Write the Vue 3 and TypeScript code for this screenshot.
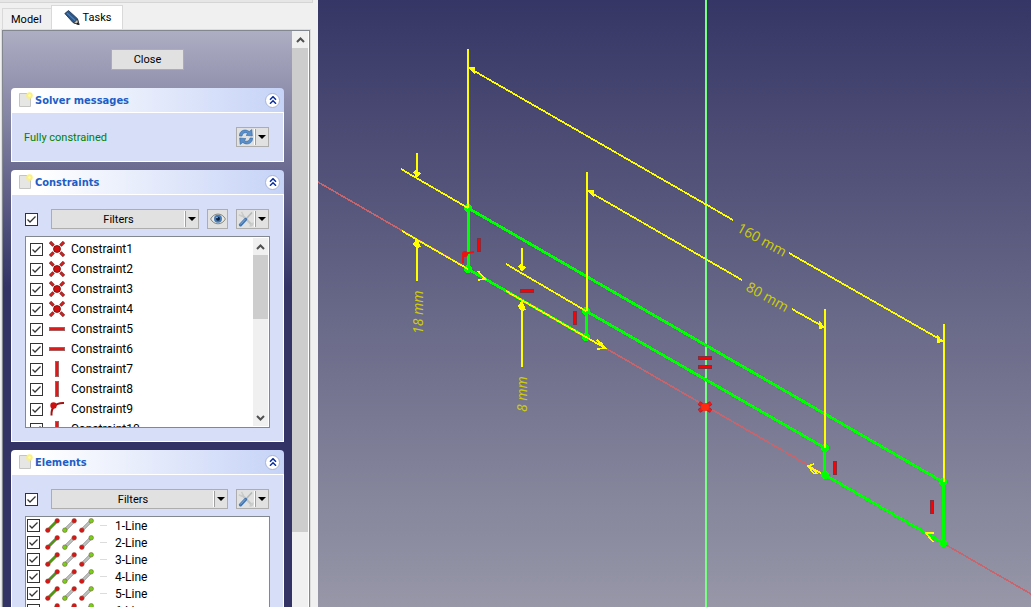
<script setup lang="ts">
import { ref } from 'vue'

type ConstraintKind = 'coincident' | 'horizontal' | 'vertical' | 'tangent'

interface Constraint {
  name: string
  kind: ConstraintKind
  active: boolean
}

interface SketchElement {
  name: string
  visible: boolean
}

const kinds: ConstraintKind[] = [
  'coincident', 'coincident', 'coincident', 'coincident',
  'horizontal', 'horizontal', 'vertical', 'vertical', 'tangent', 'vertical',
]

const constraints = ref<Constraint[]>(
  kinds.map((kind, i) => ({ name: `Constraint${i + 1}`, kind, active: true })),
)

const elements = ref<SketchElement[]>(
  Array.from({ length: 6 }, (_, i) => ({ name: `${i + 1}-Line`, visible: true })),
)

const allConstraints = ref(true)
const allElements = ref(true)

const RED = '#dc1414'
const LIME = '#73d216'

/* edge, start point and end point selection icons */
const lineIcons = [
  { line: '#4e9a06', start: RED, end: RED },
  { line: '#c0c4c0', start: LIME, end: RED },
  { line: '#c0c4c0', start: RED, end: LIME },
]

const points = [
  [468, 208], [468, 269], [586, 311], [586, 337],
  [825, 448], [825, 475], [943, 482], [943, 543],
]

const verticalMarks = [
  [479, 245], [575, 318], [835, 468], [932, 507],
]

const horizontalMarks = [
  [527, 291], [705, 358], [705, 367],
]
</script>

<template>
  <div class="app">
    <aside class="dock">
      <div class="strip"></div>
      <div class="tabs" role="tablist">
        <button class="tab" role="tab" aria-selected="false">Model</button>
        <button class="tab active" role="tab" aria-selected="true">
          <svg width="16" height="16" viewBox="0 0 16 16" aria-hidden="true">
            <path d="M.8 3.500 4.500.500l9 8.200 1.600 6-6-2z" fill="#2a5688" stroke="#16314f" stroke-width=".8" />
            <path d="M3 3 11.500 10.800" stroke="#4f7fb4" stroke-width="1.200" />
            <path d="m9.800 12.800 3.600-3.600 1.600 5.400z" fill="#c9c5bb" stroke="#222" stroke-width=".7" />
            <path d="m12.400 13.800 1.500-1.500 1.100 2.300z" fill="#111" />
          </svg>
          Tasks
        </button>
      </div>

      <div class="frame">
        <div class="tasks">
          <button class="push close">Close</button>

          <section class="card">
            <header class="head">
              <svg class="doc" width="14" height="16" viewBox="0 0 14 16" aria-hidden="true">
                <path d="M.5 1.500h11v13H.5z" fill="#e6e6e4" stroke="#c4c4c2" />
                <circle cx="10.500" cy="3.500" r="3.200" fill="#fbf07a" />
                <circle cx="10.500" cy="3.500" r="1.200" fill="#fffbd0" />
              </svg>
              <h2>Solver messages</h2>
              <button class="fold" aria-label="Collapse solver messages">
                <svg width="8" height="8" viewBox="0 0 8 8"><path d="m1 3.700 3-3 3 3M1 7.700l3-3 3 3" /></svg>
              </button>
            </header>
            <div class="body solver">
              <p class="status">Fully constrained</p>
              <button class="push split" aria-label="Update">
                <span class="main">
                  <svg width="16" height="16" viewBox="0 0 16 16">
                    <path d="M1.500 7C1 2 7-1 11.200 2.600L13.800.6 14.300 7 8 6.300l2-1.600C7.500 2.800 4.700 3.800 4 7z" fill="#5b8fc9" stroke="#2f66a5" stroke-width=".6" />
                    <path d="M14.500 9c.5 5-5.500 8-9.700 4.400L2.200 15.400 1.700 9 8 9.700l-2 1.600c2.500 1.900 5.300.9 6-2.300z" fill="#5b8fc9" stroke="#2f66a5" stroke-width=".6" />
                  </svg>
                </span>
                <span class="drop"></span>
              </button>
            </div>
          </section>

          <section class="card">
            <header class="head">
              <svg class="doc" width="14" height="16" viewBox="0 0 14 16" aria-hidden="true">
                <path d="M.5 1.500h11v13H.5z" fill="#e6e6e4" stroke="#c4c4c2" />
                <circle cx="10.500" cy="3.500" r="3.200" fill="#fbf07a" />
                <circle cx="10.500" cy="3.500" r="1.200" fill="#fffbd0" />
              </svg>
              <h2>Constraints</h2>
              <button class="fold" aria-label="Collapse constraints">
                <svg width="8" height="8" viewBox="0 0 8 8"><path d="m1 3.700 3-3 3 3M1 7.700l3-3 3 3" /></svg>
              </button>
            </header>
            <div class="body">
              <div class="tools">
                <input v-model="allConstraints" type="checkbox" class="tick all" aria-label="All constraints" />
                <button class="push split wide">
                  <span class="main">Filters</span>
                  <span class="drop"></span>
                </button>
                <button class="push eye" aria-label="Show constraints">
                  <svg width="16" height="12" viewBox="0 0 16 12">
                    <path d="M.6 6C4-.6 12-.6 15.400 6 12 12.400 4 12.400.6 6z" fill="#e9eae6" stroke="#85877f" />
                    <circle cx="8" cy="5.800" r="4" fill="#4a7db5" />
                    <circle cx="8" cy="5.800" r="2" fill="#10243f" />
                    <circle cx="7" cy="4.600" r=".7" fill="#fff" />
                  </svg>
                </button>
                <button class="push split" aria-label="Constraint settings">
                  <span class="main">
                    <svg width="16" height="16" viewBox="0 0 16 16">
                      <path d="m4 4 9.500 9.500" stroke="#c3c6c5" stroke-width="2.200" />
                      <path d="M3.500.8 5 3.500 3.500 5 .8 3.700M11.500 15q3.500 0 3.500-3.500" fill="none" stroke="#c9cccb" stroke-width="1.500" />
                      <path d="m8 8 6-6.500" stroke="#b4b8b7" stroke-width="1.600" />
                      <path d="M2.500 13.800 7.500 8.500" stroke="#3f74b3" stroke-width="3.200" stroke-linecap="round" />
                      <path d="M2.500 13.200 7 8.500" stroke="#8db4df" stroke-width="1" stroke-linecap="round" />
                    </svg>
                  </span>
                  <span class="drop"></span>
                </button>
              </div>
              <div class="list constraints">
                <ul>
                  <li v-for="c in constraints" :key="c.name">
                    <label>
                      <input v-model="c.active" type="checkbox" class="tick" />
                      <svg width="16" height="16" viewBox="0 0 16 16" aria-hidden="true">
                        <template v-if="c.kind === 'coincident'">
                          <path d="m1 1 3.600 3.600M11.400 11.400 15 15M15 1l-3.600 3.600M4.600 11.400 1 15" stroke="#7c2424" stroke-width="3.200" />
                          <path d="m1.400 1.400 2.800 2.800M11.800 11.800l2.800 2.800M14.600 1.400l-2.800 2.800M4.200 11.800l-2.800 2.800" stroke="#dc2020" stroke-width="1.800" />
                          <path d="m4 4 8 8M12 4l-8 8" stroke="#c04040" stroke-width="1" />
                          <circle cx="8" cy="8" r="3.500" fill="#d01010" stroke="#7c0c0c" stroke-width=".8" />
                        </template>
                        <rect v-else-if="c.kind === 'horizontal'" x=".5" y="6.500" width="15" height="3" fill="#e01818" stroke="#a06060" />
                        <rect v-else-if="c.kind === 'vertical'" x="6.500" y=".5" width="3" height="15" fill="#e01818" stroke="#a06060" />
                        <template v-else>
                          <path d="M2.500 14.500C2 7 6 1.500 15 2" fill="none" stroke="#a01414" stroke-width="2" />
                          <circle cx="4.500" cy="4.500" r="3.200" fill="#cc1010" />
                        </template>
                      </svg>
                      <span>{{ c.name }}</span>
                    </label>
                  </li>
                </ul>
                <div class="bar">
                  <button class="step" aria-label="Scroll up"><svg width="9" height="6" viewBox="0 0 9 6"><path d="m1 5 3.500-3.500L8 5" /></svg></button>
                  <div class="thumb"></div>
                  <button class="step" aria-label="Scroll down"><svg width="9" height="6" viewBox="0 0 9 6"><path d="m1 1 3.500 3.500L8 1" /></svg></button>
                </div>
              </div>
            </div>
          </section>

          <section class="card">
            <header class="head">
              <svg class="doc" width="14" height="16" viewBox="0 0 14 16" aria-hidden="true">
                <path d="M.5 1.500h11v13H.5z" fill="#e6e6e4" stroke="#c4c4c2" />
                <circle cx="10.500" cy="3.500" r="3.200" fill="#fbf07a" />
                <circle cx="10.500" cy="3.500" r="1.200" fill="#fffbd0" />
              </svg>
              <h2>Elements</h2>
              <button class="fold" aria-label="Collapse elements">
                <svg width="8" height="8" viewBox="0 0 8 8"><path d="m1 3.700 3-3 3 3M1 7.700l3-3 3 3" /></svg>
              </button>
            </header>
            <div class="body">
              <div class="tools">
                <input v-model="allElements" type="checkbox" class="tick all" aria-label="All elements" />
                <button class="push split wide">
                  <span class="main">Filters</span>
                  <span class="drop"></span>
                </button>
                <button class="push split" aria-label="Element settings">
                  <span class="main">
                    <svg width="16" height="16" viewBox="0 0 16 16">
                      <path d="m4 4 9.500 9.500" stroke="#c3c6c5" stroke-width="2.200" />
                      <path d="M3.500.8 5 3.500 3.500 5 .8 3.700M11.500 15q3.500 0 3.500-3.500" fill="none" stroke="#c9cccb" stroke-width="1.500" />
                      <path d="m8 8 6-6.500" stroke="#b4b8b7" stroke-width="1.600" />
                      <path d="M2.500 13.800 7.500 8.500" stroke="#3f74b3" stroke-width="3.200" stroke-linecap="round" />
                      <path d="M2.500 13.200 7 8.500" stroke="#8db4df" stroke-width="1" stroke-linecap="round" />
                    </svg>
                  </span>
                  <span class="drop"></span>
                </button>
              </div>
              <div class="list elements">
                <ul>
                  <li v-for="e in elements" :key="e.name">
                    <label>
                      <input v-model="e.visible" type="checkbox" class="tick" />
                      <span class="trio">
                        <svg v-for="(icon, i) in lineIcons" :key="i" width="15" height="15" viewBox="0 0 15 15" aria-hidden="true">
                          <path d="M2.500 12.500 12.500 2.500" stroke="#777" stroke-width="3" />
                          <path d="M2.500 12.500 12.500 2.500" :stroke="icon.line" stroke-width="2" />
                          <circle cx="2.800" cy="12.200" r="2.300" :fill="icon.start" stroke="#7a4a3a" stroke-width=".5" />
                          <circle cx="12.200" cy="2.800" r="2.300" :fill="icon.end" stroke="#7a4a3a" stroke-width=".5" />
                        </svg>
                      </span>
                      <span class="dash"></span>
                      <span>{{ e.name }}</span>
                    </label>
                  </li>
                </ul>
              </div>
            </div>
          </section>
        </div>

        <div class="bar outer">
          <button class="step" aria-label="Scroll up"><svg width="9" height="6" viewBox="0 0 9 6"><path d="m1 5 3.500-3.500L8 5" /></svg></button>
          <div class="thumb"></div>
        </div>
      </div>
    </aside>

    <main class="view">
      <svg viewBox="318 0 713 607" preserveAspectRatio="xMinYMin slice" aria-label="Sketch">
        <g shape-rendering="crispEdges">
          <!-- axes -->
          <path d="M318 182 1031 594" stroke="#c8646c" stroke-width="1.600" />
          <path d="M706 0V607" stroke="#78ff82" stroke-width="2" />

          <!-- sketch geometry -->
          <g fill="none" stroke="#00ff00">
            <path d="M468 208 943 482M586 311 825 448M468 269 586 337M825 475 943 543" stroke-width="2.800" />
            <path d="M468.500 208V269M586.500 311V337M824.500 448V475M943.500 482V543" stroke-width="3" />
          </g>
          <circle v-for="([x, y], i) in points" :key="`p${i}`" :cx="x" :cy="y" r="4.200" fill="#00ff00" />

          <!-- dimensions -->
          <g fill="none" stroke="#ffff00" stroke-width="2">
            <path d="M468 49V208M587 172V311M825 309V448M944 324V482" />
            <path d="M417 153V173M417 243V281M522 248V268M522 305V367" />
          </g>
          <g fill="none" stroke="#ffff00" stroke-width="1.700">
            <path d="M469 68 733 220M789 253 943 341" />
            <path d="M588 191 742 280M792 309 824 327" />
            <path d="M401 169 468 208M402 231 468 269M506 264 586 311M506 291 605 348M821 473 808 466" />
            <path d="M478 271 485 279 478 280M597 340 605 348 597 349M601 342 604 348M814 464 808 466 814 474M809 465 817 474M934 533H926L933 542" />
          </g>
          <g fill="#ffff00">
            <path d="M468 67h7v8zM587 190h7v8zM943 342l-6-8v9zM825 328l-6-8v9z" />
            <path d="m417 178-4-6 3-2 5 3zM522 272l-4-6 3-2 5 3zM417 238l-4 6 3 4 5-1zM522 300l-4 6 3 5 5-1z" />
          </g>
        </g>
        <g class="dim">
          <text transform="translate(736 231) rotate(29)">160 mm</text>
          <text transform="translate(745 290) rotate(29)">80 mm</text>
          <text class="slant" transform="translate(423 334) rotate(-90)">18 mm</text>
          <text class="slant" transform="translate(527 412) rotate(-90)">8 mm</text>
        </g>

        <!-- constraint marks -->
        <g fill="#ff0000" stroke="#7c3040">
          <rect v-for="([x, y], i) in verticalMarks" :key="`v${i}`" :x="x - 1.5" :y="y - 6.5" width="3" height="13" />
          <rect v-for="([x, y], i) in horizontalMarks" :key="`h${i}`" :x="x - 6.5" :y="y - 1.5" width="13" height="3" />
        </g>
        <path d="M463 263V257q1-4 11-5" fill="none" stroke="#f01010" stroke-width="2" />
        <circle cx="465" cy="254" r="3" fill="#f01010" />
        <path d="m699 403 12 8M711 403l-12 8" stroke="#7c3040" stroke-width="4.500" />
        <path d="m699 403 12 8M711 403l-12 8" stroke="#f01818" stroke-width="2.800" />
        <circle cx="705" cy="407" r="4" fill="#ff2a10" />
      </svg>
    </main>
  </div>
</template>

<style>
body {
  margin: 0;
}
</style>

<style scoped>
.app {
  display: flex;
  height: 100vh;
  overflow: hidden;
  background: #f0f0f0;
  color: #000;
  font: 11px/14px Roboto, "Open Sans", sans-serif;
}

button {
  font: inherit;
  color: inherit;
  padding: 0;
  margin: 0;
}

svg {
  display: block;
  flex: none;
}

.dock {
  display: flex;
  flex: 0 0 318px;
  flex-direction: column;
  box-sizing: border-box;
  padding-right: 5px;
}

.strip {
  flex: none;
  height: 2px;
  border: solid #d5d5d5;
  border-width: 0 1px 1px 0;
  background: #e6e6e6;
}

.tabs {
  display: flex;
  flex: none;
  align-items: flex-end;
  height: 26px;
  padding-left: 2px;
}

.tab {
  height: 21px;
  padding: 1px 9px 0 8px;
  border: 1px solid #d9d9d9;
  border-width: 1px 0 0 1px;
  background: #f0f0f0;
}

.tab.active {
  display: flex;
  align-items: center;
  gap: 3px;
  height: 24px;
  padding: 0 11px 0 12px;
  border-right-width: 1px;
  background: #fff;
}

.frame {
  display: flex;
  flex: 1;
  min-height: 0;
  margin: 1px 3px 0 2px;
  padding-right: 1px;
  border: 1px solid #828790;
  border-width: 1px 1px 0;
  outline: 1px solid #dcdcdc;
  background: #fff;
}

.tasks {
  flex: 1;
  min-width: 0;
  overflow: hidden;
  padding: 18px 8px 0;
  background: linear-gradient(#adadc3 0, #333366 256px);
}

.push {
  border: 1px solid #adadad;
  background: #e1e1e1;
}

.close {
  display: block;
  width: 73px;
  height: 21px;
  margin: 0 auto 18px;
}

.card {
  margin-bottom: 8px;
}

.head {
  display: flex;
  align-items: center;
  height: 24px;
  padding: 0 4px 0 8px;
  border-bottom: 1px solid #fff;
  border-radius: 4px 4px 0 0;
  background: linear-gradient(90deg, #fff 0, #fff 10%, #c6d3f7);
}

.doc {
  margin-right: 2px;
}

h2 {
  flex: 1;
  margin: 0;
  padding-top: 2px;
  color: #215dc6;
  font: bold 11px/14px "DejaVu Sans Condensed", "DejaVu Sans", sans-serif;
}

.fold {
  display: grid;
  place-items: center;
  width: 15px;
  height: 15px;
  border: 1px solid #a9b4d6;
  border-radius: 50%;
  background: #fff;
}

.fold path {
  fill: none;
  stroke: #0a2f9c;
  stroke-width: 1.5;
}

.body {
  padding: 14px 13px 13px;
  border: 1px solid #fff;
  border-top: 0;
  background: #d6dff7;
}

.solver {
  display: flex;
  align-items: center;
  justify-content: space-between;
  padding: 14px 14px 14px 12px;
}

.status {
  margin: 0;
  padding-top: 2px;
  color: #008000;
}

.split {
  display: flex;
  align-items: center;
  width: 33px;
  height: 20px;
}

.split.wide {
  flex: 1;
  margin-left: 5px;
}

.split .main {
  display: grid;
  flex: 1;
  place-items: center;
}

.split.wide .main {
  padding-top: 2px;
}

.drop {
  display: grid;
  flex: 0 0 12px;
  place-items: center;
  height: 16px;
  border-left: 1px solid #a0a0a0;
  box-shadow: -1px 0 #fff;
}

.drop::before {
  border: solid transparent;
  border-width: 4px 4px 0;
  border-top-color: #000;
  content: "";
}

.tools {
  display: flex;
  align-items: center;
  gap: 8px;
  padding-right: 1px;
  margin-bottom: 7px;
}

.eye {
  display: grid;
  place-items: center;
  width: 21px;
  height: 20px;
}

.tick {
  flex: none;
  width: 13px;
  height: 13px;
  margin: 0;
  appearance: none;
  border: 1px solid #333;
  background: #fff;
}

.tick:checked {
  background: #fff url("data:image/svg+xml,%3Csvg xmlns='http://www.w3.org/2000/svg' viewBox='0 0 11 11'%3E%3Cpath d='M1.500 5.500 4 8 9.500 2.500' fill='none' stroke='%23333' stroke-width='1.300'/%3E%3C/svg%3E");
}

.list {
  display: flex;
  border: 1px solid #828790;
  background: #fff;
  font-size: 12px;
}

ul {
  flex: 1;
  margin: 0;
  padding: 2px 0 0;
  list-style: none;
}

label {
  display: flex;
  align-items: center;
}

.constraints {
  height: 190px;
  overflow: hidden;
  padding-right: 1px;
}

.constraints label {
  gap: 6px;
  height: 20px;
  padding-left: 4px;
}

.constraints .bar {
  margin: 1px 0;
}

.elements ul {
  padding-top: 0;
}

.elements label {
  height: 17px;
  padding-left: 1px;
}

.trio {
  display: flex;
  gap: 2px;
  margin-left: 5px;
}

.dash {
  width: 7px;
  height: 1px;
  margin: 0 8px 0 6px;
  background: #dcdcdc;
}

.bar {
  display: flex;
  flex: 0 0 15px;
  flex-direction: column;
  background: #f0f0f0;
}

.bar.outer {
  flex-basis: 16px;
}

.step {
  display: grid;
  flex: 0 0 17px;
  place-items: center;
  border: 0;
  background: none;
}

.step path {
  fill: none;
  stroke: #505050;
  stroke-width: 2;
}

.thumb {
  flex: 0 0 34%;
  margin-bottom: auto;
  background: #cdcdcd;
}

.outer .thumb {
  flex-basis: 84%;
}

.view {
  flex: 1;
  min-width: 0;
  background: linear-gradient(#363666, #9797a8);
}

.view svg {
  width: 100%;
  height: 100%;
}

.dim {
  fill: #cccc08;
  font: 14px "Noto Sans", sans-serif;
}

.slant {
  font-style: italic;
}
</style>
